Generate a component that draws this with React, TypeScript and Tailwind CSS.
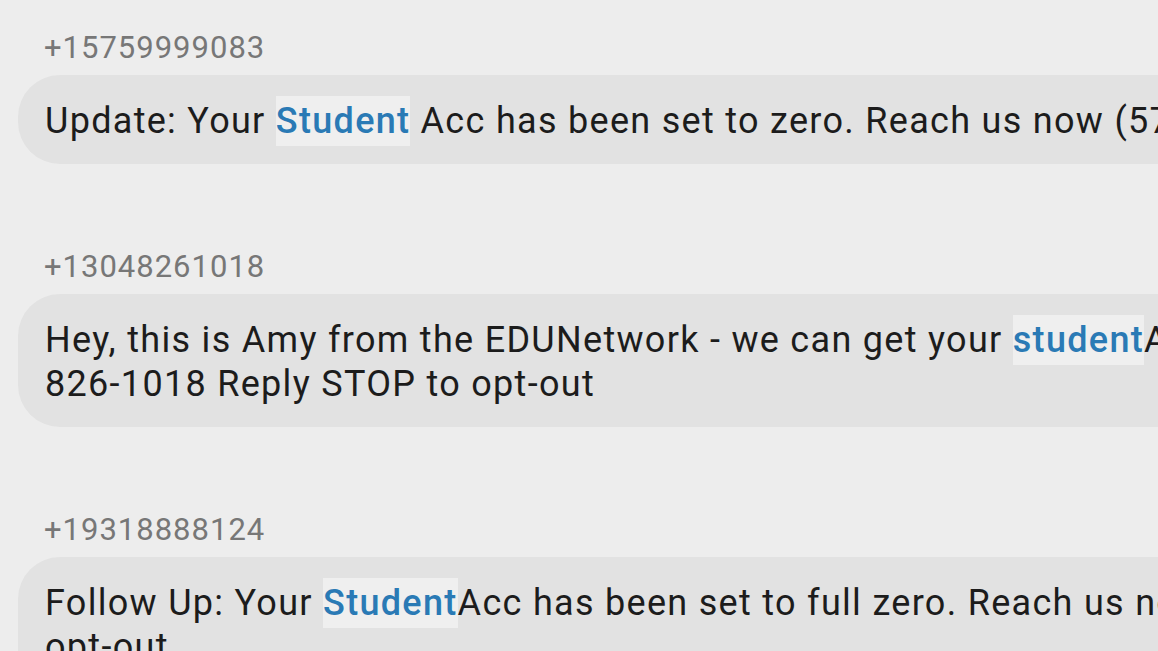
const MESSAGES = [
  {
    from: "+15759999083",
    lines: [
      [
        { t: "Update: Your " },
        { t: "Student", link: true },
        { t: " Acc has been set to zero. Reach us now (575) 999-9083 Reply STOP to opt-out" },
      ],
    ],
  },
  {
    from: "+13048261018",
    lines: [
      [
        { t: "Hey, this is Amy from the EDUNetwork - we can get your " },
        { t: "student", link: true },
        { t: "Acc forgiven. Call us now at (304)" },
      ],
      [{ t: "826-1018 Reply STOP to opt-out" }],
    ],
  },
  {
    from: "+19318888124",
    lines: [
      [
        { t: "Follow Up: Your " },
        { t: "Student", link: true },
        { t: "Acc has been set to full zero. Reach us now (931) 888-8124 Reply STOP to" },
      ],
      [{ t: "opt-out" }],
    ],
  },
];

export default function App() {
  return (
    <div
      className="h-[651px] w-[1158px] overflow-hidden bg-[#ededed] pt-[28px]"
      style={{ fontFamily: "Roboto, 'Noto Sans', sans-serif" }}
    >
      {MESSAGES.map((m) => (
        <div key={m.from} className="mb-[83px]">
          <div className="pl-[44px] text-[31px] leading-[40px] tracking-[1px] text-[#777777]">
            {m.from}
          </div>
          <div className="ml-[18px] mt-[7px] w-[1400px] rounded-[42px] bg-[#e2e2e2] pb-[21px] pl-[27px] pt-[24px]">
            {m.lines.map((line, i) => (
              <div
                key={i}
                className="whitespace-nowrap text-[36px] leading-[44px] tracking-[1.3px] text-[#1c1c1c]"
              >
                {line.map((seg, j) =>
                  seg.link ? (
                    <span key={j} className="bg-[#efefef] py-[4px] font-medium text-[#2a7ab5]">
                      {seg.t}
                    </span>
                  ) : (
                    <span key={j}>{seg.t}</span>
                  )
                )}
              </div>
            ))}
          </div>
        </div>
      ))}
    </div>
  );
}
